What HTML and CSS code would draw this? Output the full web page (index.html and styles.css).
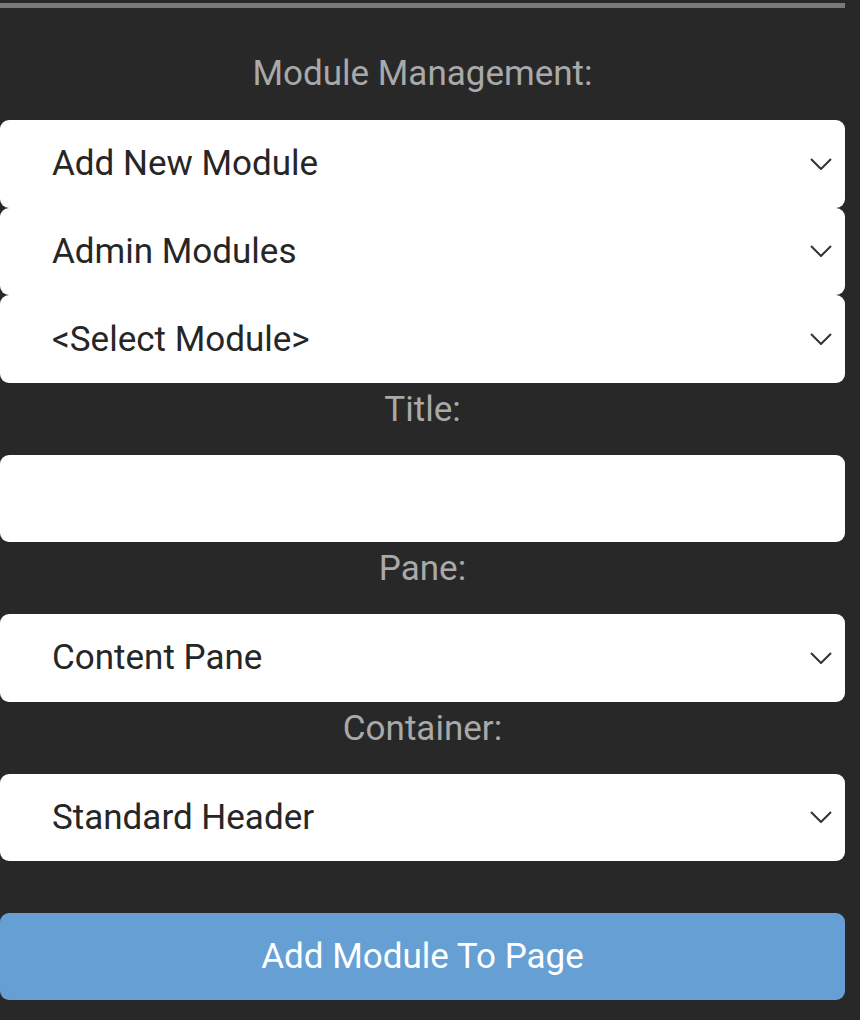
FILE: index.html
```html
<!DOCTYPE html>
<html lang="en">
<head>
<meta charset="utf-8">
<title>Module Management</title>
<link rel="stylesheet" href="styles.css">
</head>
<body>
<div class="panel">
  <div class="rule"></div>
  <div class="label first">Module Management:</div>
  <div class="stack">
    <div class="select"><span>Add New Module</span><svg class="chev" viewBox="0 0 22 12"><path d="M1 1 L11 11 L21 1"/></svg></div>
    <div class="select"><span>Admin Modules</span><svg class="chev" viewBox="0 0 22 12"><path d="M1 1 L11 11 L21 1"/></svg></div>
    <div class="select"><span>&lt;Select Module&gt;</span><svg class="chev" viewBox="0 0 22 12"><path d="M1 1 L11 11 L21 1"/></svg></div>
  </div>
  <div class="label">Title:</div>
  <div class="select input"></div>
  <div class="label">Pane:</div>
  <div class="select"><span>Content Pane</span><svg class="chev" viewBox="0 0 22 12"><path d="M1 1 L11 11 L21 1"/></svg></div>
  <div class="label">Container:</div>
  <div class="select"><span>Standard Header</span><svg class="chev" viewBox="0 0 22 12"><path d="M1 1 L11 11 L21 1"/></svg></div>
  <button class="btn">Add Module To Page</button>
</div>
</body>
</html>
```
FILE: styles.css
```css
html, body {
  margin: 0;
  padding: 0;
  background: #282828;
}
body {
  font-family: Roboto, "Liberation Sans", sans-serif;
  height: 1020px;
  overflow: hidden;
}
.panel {
  width: 845px;
  padding-top: 3px;
  display: flex;
  flex-direction: column;
}
.rule {
  height: 5px;
  background: #7a7a7a;
}
.label {
  color: #a9a9a9;
  font-size: 35px;
  line-height: 52px;
  padding-top: 1px;
  text-align: center;
  margin-bottom: 19px;
}
.label.first {
  margin-top: 39px;
  margin-bottom: 20px;
}
.stack {
  display: flex;
  flex-direction: column;
}
.select {
  height: 87.67px;
  box-sizing: border-box;
  background: #fff;
  border-radius: 9px;
  display: flex;
  align-items: center;
  justify-content: space-between;
  padding: 0 13px 0 52px;
  color: #262626;
  font-size: 35px;
}
.select.input,
.panel > .select {
  height: 87.3px;
}
.chev {
  width: 22px;
  height: 12px;
  fill: none;
  stroke: #333;
  stroke-width: 2;
}
.btn {
  margin-top: 52.5px;
  height: 87px;
  border: 0;
  border-radius: 9px;
  background: #659fd4;
  color: #fff;
  font-family: Roboto, "Liberation Sans", sans-serif;
  font-size: 35px;
  padding: 0;
}
```
